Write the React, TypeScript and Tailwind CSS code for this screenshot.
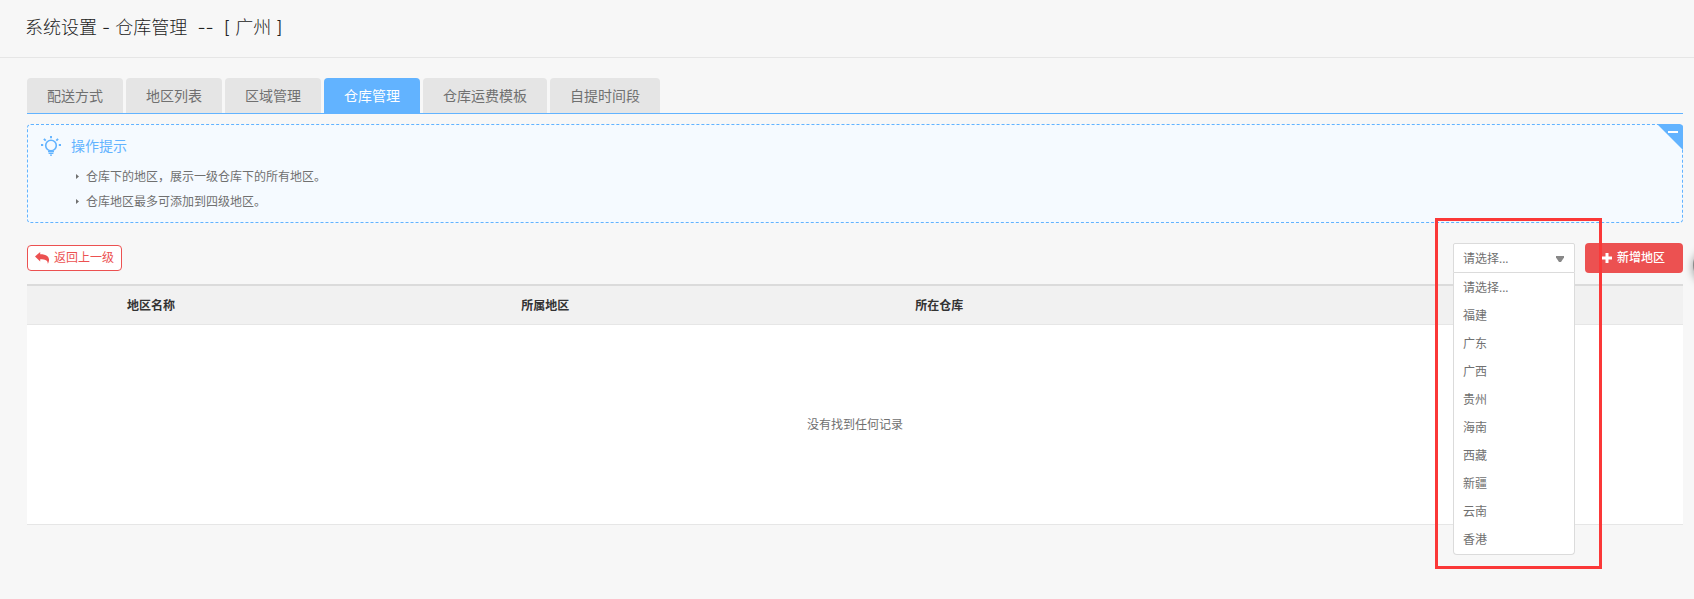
import { useState } from 'react';

const TABS = ['配送方式', '地区列表', '区域管理', '仓库管理', '仓库运费模板', '自提时间段'];

const TIPS = ['仓库下的地区，展示一级仓库下的所有地区。', '仓库地区最多可添加到四级地区。'];

const REGIONS = ['请选择...', '福建', '广东', '广西', '贵州', '海南', '西藏', '新疆', '云南', '香港'];

function BulbIcon() {
  return (
    <svg className="h-5 w-5" viewBox="0 0 20 20" fill="none" stroke="currentColor" aria-hidden="true">
      <circle cx="10" cy="9.5" r="5.3" strokeWidth="1.6" />
      <path d="M7 15.6h6M7.6 17.4h4.8M9 19.1h2" strokeWidth="1.3" />
      <path d="M10 0v2.2M0 9h2.2M17.8 9H20M2.9 2.9l1.8 1.8M17.1 2.9l-1.8 1.8" strokeWidth="1.9" />
    </svg>
  );
}

function ReplyIcon() {
  return (
    <svg className="h-3 w-[14px]" viewBox="0 0 14 12" fill="currentColor" aria-hidden="true">
      <path d="M0 4.4L5.2 0v2.2c5.6 0 9.2 2 8.8 6.4-.1 1.300-.6 2.400-1.200 3.400.3-3.400-2.200-4.800-7.600-4.800v2.300z" />
    </svg>
  );
}

function PlusIcon() {
  return (
    <svg className="h-[10px] w-[10px]" viewBox="0 0 10 10" fill="currentColor" aria-hidden="true">
      <path d="M3.5 0h3v3.5H10v3H6.5V10h-3V6.5H0v-3h3.5z" />
    </svg>
  );
}

function Tips() {
  const [open, setOpen] = useState(true);

  return (
    <section className="relative mt-[10px] rounded border border-dashed border-[#62b3ff] bg-[#f5faff] px-[13px] pt-[11px] pb-2">
      <div className="flex h-5 items-center gap-[10px] text-[#62b3ff]">
        <BulbIcon />
        <h2 className="text-sm">操作提示</h2>
      </div>
      {open && (
        <ul className="mt-2 pl-[35px] text-xs text-[#707070]">
          {TIPS.map(tip => (
            <li key={tip} className="flex h-[25px] items-center gap-[7px]">
              <svg className="h-[5px] w-[3px]" viewBox="0 0 3 5" aria-hidden="true">
                <path d="M0 0l3 2.5L0 5z" fill="currentColor" />
              </svg>
              {tip}
            </li>
          ))}
        </ul>
      )}
      <button
        type="button"
        aria-label="操作提示"
        aria-expanded={open}
        onClick={() => setOpen(!open)}
        className="absolute -top-px -right-px h-[26px] w-[26px] overflow-hidden rounded-tr"
      >
        <svg className="h-full w-full" viewBox="0 0 26 26" aria-hidden="true">
          <path d="M0 0h26v26z" fill="#62b3ff" />
          <path d="M11 7h10v2H11z" fill="#fff" />
        </svg>
      </button>
    </section>
  );
}

function RegionSelect() {
  const [region, setRegion] = useState(REGIONS[0]);

  return (
    <div className="relative w-[122px] text-xs text-[#707070]">
      <select
        aria-label="地区"
        value={region}
        onChange={(e) => setRegion(e.target.value)}
        className="block h-[30px] w-full appearance-none rounded-t-xs border border-[#dbdbdb] bg-white pt-px pr-6 pl-[9px]"
      >
        {REGIONS.map(name => (
          <option key={name} value={name}>{name}</option>
        ))}
      </select>
      <svg className="pointer-events-none absolute top-[13px] right-[11px] h-[6px] w-2" viewBox="0 0 8 6" aria-hidden="true">
        <path d="M0 0h8v1.5L5 6H3L0 1.5z" fill="#888" />
      </svg>

      {/* Open list */}
      <ul className="absolute top-full left-0 z-10 w-full rounded-b border border-t-0 border-[#dbdbdb] bg-white pt-px">
        {REGIONS.map(name => (
          <li key={name}>
            <button
              type="button"
              onClick={() => setRegion(name)}
              className="block h-7 w-full pl-[9px] text-left hover:bg-gray-100"
            >
              {name}
            </button>
          </li>
        ))}
      </ul>

      {/* Highlight frame */}
      <div className="pointer-events-none absolute -top-[25px] -right-[27px] -left-[18px] z-20 h-[351px] border-3 border-[#fb3838]" />
    </div>
  );
}

export default function App() {
  const [activeTab, setActiveTab] = useState('仓库管理');

  return (
    <div className="relative min-h-screen overflow-hidden bg-[#f7f7f7] font-['Open_Sans','Noto_Sans_CJK_SC',sans-serif]">
      <header className="flex h-[58px] items-center border-b border-[#e6e6e6] px-[25px] pb-[2px]">
        <h1 className="font-['Inter','Noto_Sans_CJK_SC',sans-serif] text-lg font-light whitespace-pre text-[#222]">
          {'系统设置 - 仓库管理  --  [ 广州 ]'}
        </h1>
      </header>

      <main className="pt-5 pr-[11px] pl-[27px]">
        {/* Tabs */}
        <nav className="flex gap-[3px] border-b border-[#62b3ff]">
          {TABS.map(tab => (
            <a
              key={tab}
              href="#"
              onClick={() => setActiveTab(tab)}
              className={`h-[35px] rounded-t px-5 text-sm leading-[35px] ${
                tab === activeTab ? 'bg-[#62b3ff] text-white' : 'bg-[#e5e5e5] text-[#707070]'
              }`}
            >
              {tab}
            </a>
          ))}
        </nav>

        <Tips />

        {/* Toolbar */}
        <div className="mt-5 flex items-center justify-between">
          <a
            href="#"
            className="flex h-[26px] items-center gap-[5px] rounded border border-[#ec5151] bg-white px-[7px] text-xs text-[#ec5151]"
          >
            <ReplyIcon />
            返回上一级
          </a>
          <div className="flex gap-[10px]">
            <RegionSelect />
            <button
              type="button"
              className="flex h-[30px] items-center gap-[5px] rounded bg-[#ec5151] pr-[18px] pl-[17px] text-xs font-medium text-white"
            >
              <PlusIcon />
              新增地区
            </button>
          </div>
        </div>

        {/* Regions */}
        <table className="mt-[11px] w-full table-fixed border-t-2 border-b border-t-[#dbdbdb] border-b-[#e6e6e6] text-xs">
          <thead>
            <tr className="h-[39px] border-b border-[#e6e6e6] bg-[#f1f1f1] text-left text-[#333]">
              <td className="w-[100px]" />
              <th className="w-[23.8%] pt-[2px] font-bold">地区名称</th>
              <th className="w-[23.8%] pt-[2px] font-bold">所属地区</th>
              <th className="w-[23.8%] pt-[2px] font-bold">所在仓库</th>
              <td />
            </tr>
          </thead>
          <tbody>
            <tr className="h-[200px] bg-white">
              <td colSpan={5} className="pt-[2px] text-center text-[#707070]">没有找到任何记录</td>
            </tr>
          </tbody>
        </table>
      </main>

      {/* Edge of the docked side widget */}
      <div className="absolute top-[247px] -right-[35px] h-9 w-9 rounded-full bg-[#888] shadow-[0_2px_8px_rgba(0,0,0,0.4)]" />
    </div>
  );
}
